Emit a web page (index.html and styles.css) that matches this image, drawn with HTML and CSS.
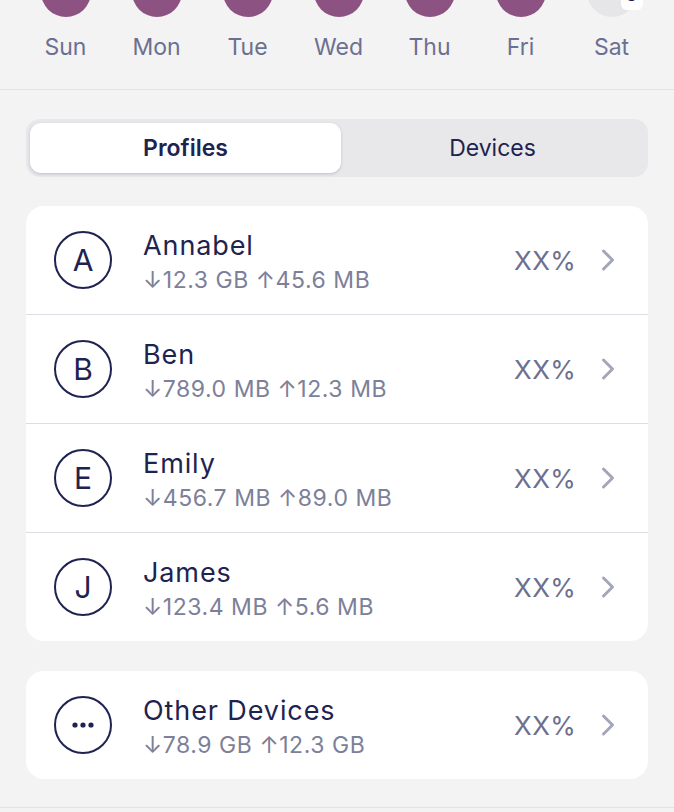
FILE: index.html
```html
<!DOCTYPE html>
<html>
<head>
<meta charset="utf-8">
<link rel="stylesheet" href="styles.css">
</head>
<body>
<div class="week">
  <div class="day"><span class="dot filled"></span><span class="label">Sun</span></div>
  <div class="day"><span class="dot filled"></span><span class="label">Mon</span></div>
  <div class="day"><span class="dot filled"></span><span class="label">Tue</span></div>
  <div class="day"><span class="dot filled"></span><span class="label">Wed</span></div>
  <div class="day"><span class="dot filled"></span><span class="label">Thu</span></div>
  <div class="day"><span class="dot filled"></span><span class="label">Fri</span></div>
  <div class="day"><span class="dot empty"><span class="badge">8</span></span><span class="label">Sat</span></div>
</div>

<div class="segmented">
  <div class="seg active">Profiles</div>
  <div class="seg">Devices</div>
</div>

<div class="card">
  <div class="row">
    <div class="avatar">A</div>
    <div class="info"><div class="name">Annabel</div><div class="usage">↓12.3 GB ↑45.6 MB</div></div>
    <div class="pct">XX%</div>
    <svg class="chev" viewBox="0 0 14 24" width="14" height="24"><path d="M2.5 3 L11.5 12 L2.5 21" fill="none" stroke="currentColor" stroke-width="3" stroke-linecap="round" stroke-linejoin="round"/></svg>
  </div>
  <div class="row">
    <div class="avatar">B</div>
    <div class="info"><div class="name">Ben</div><div class="usage">↓789.0 MB ↑12.3 MB</div></div>
    <div class="pct">XX%</div>
    <svg class="chev" viewBox="0 0 14 24" width="14" height="24"><path d="M2.5 3 L11.5 12 L2.5 21" fill="none" stroke="currentColor" stroke-width="3" stroke-linecap="round" stroke-linejoin="round"/></svg>
  </div>
  <div class="row">
    <div class="avatar">E</div>
    <div class="info"><div class="name">Emily</div><div class="usage">↓456.7 MB ↑89.0 MB</div></div>
    <div class="pct">XX%</div>
    <svg class="chev" viewBox="0 0 14 24" width="14" height="24"><path d="M2.5 3 L11.5 12 L2.5 21" fill="none" stroke="currentColor" stroke-width="3" stroke-linecap="round" stroke-linejoin="round"/></svg>
  </div>
  <div class="row">
    <div class="avatar">J</div>
    <div class="info"><div class="name">James</div><div class="usage">↓123.4 MB ↑5.6 MB</div></div>
    <div class="pct">XX%</div>
    <svg class="chev" viewBox="0 0 14 24" width="14" height="24"><path d="M2.5 3 L11.5 12 L2.5 21" fill="none" stroke="currentColor" stroke-width="3" stroke-linecap="round" stroke-linejoin="round"/></svg>
  </div>
</div>

<div class="card other">
  <div class="row">
    <div class="avatar dots"><svg viewBox="0 0 24 8" width="24" height="8"><circle cx="4" cy="4" r="2.6" fill="currentColor"/><circle cx="12" cy="4" r="2.6" fill="currentColor"/><circle cx="20" cy="4" r="2.6" fill="currentColor"/></svg></div>
    <div class="info"><div class="name">Other Devices</div><div class="usage">↓78.9 GB ↑12.3 GB</div></div>
    <div class="pct">XX%</div>
    <svg class="chev" viewBox="0 0 14 24" width="14" height="24"><path d="M2.5 3 L11.5 12 L2.5 21" fill="none" stroke="currentColor" stroke-width="3" stroke-linecap="round" stroke-linejoin="round"/></svg>
  </div>
</div>

<div class="bottom-line"></div>
</body>
</html>
```

FILE: styles.css
```css
* { box-sizing: border-box; }
html, body { margin: 0; padding: 0; }
body {
  background: #f3f3f3;
  font-family: "Inter", "Noto Sans", sans-serif;
  color: #1e2350;
  width: 674px;
  height: 812px;
  overflow: hidden;
}

.week {
  display: flex;
  padding-left: 20px;
  height: 90px;
  border-bottom: 1px solid #e2e2e6;
}
.day {
  width: 91px;
  display: flex;
  flex-direction: column;
  align-items: center;
}
.dot {
  position: relative;
  width: 50px;
  height: 50px;
  border-radius: 50%;
  margin-top: -33px;
  display: block;
}
.dot.filled { background: #8c5282; }
.dot.empty { background: #e6e6e9; }
.badge {
  position: absolute;
  right: -6px;
  top: 21px;
  width: 22px;
  height: 22px;
  border-radius: 6px;
  background: #ffffff;
  font-size: 16px;
  font-weight: 700;
  color: #1e2350;
  line-height: 16px;
  display: flex;
  align-items: flex-end;
  justify-content: center;
  padding-bottom: 7px;
}
.label {
  margin-top: 16px;
  font-size: 23px;
  line-height: 28px;
  color: #6c7090;
}

.segmented {
  margin: 29px 26px 0;
  height: 58px;
  background: #e8e8eb;
  border-radius: 14px;
  padding: 4px;
  display: grid;
  grid-template-columns: 311px 1fr;
}
.seg {
  display: flex;
  align-items: center;
  justify-content: center;
  font-size: 23px;
  color: #1e2350;
  border-radius: 11px;
}
.seg.active {
  background: #ffffff;
  font-weight: 600;
  box-shadow: 0 1px 3px rgba(40, 40, 80, 0.22);
}

.card {
  margin: 29px 26px 0;
  background: #ffffff;
  border-radius: 18px;
}
.card.other { margin-top: 30px; }
.row {
  height: 109px;
  display: flex;
  align-items: center;
  padding: 0 33px 0 28px;
  border-bottom: 1px solid #dcdce3;
}
.row:last-child {
  border-bottom: none;
  height: 108px;
}
.avatar {
  width: 58px;
  height: 58px;
  border: 2px solid #1e2350;
  border-radius: 50%;
  display: flex;
  align-items: center;
  justify-content: center;
  font-size: 30px;
  color: #1e2350;
  flex-shrink: 0;
}
.info {
  margin-left: 31px;
  flex: 1;
  padding-top: 5px;
}
.name {
  font-size: 27px;
  line-height: 32px;
  letter-spacing: 0.9px;
  color: #1e2350;
}
.usage {
  font-size: 23px;
  line-height: 30px;
  letter-spacing: 0.55px;
  color: #7c8099;
  margin-top: 3px;
}
.pct {
  font-size: 26px;
  letter-spacing: 0.3px;
  color: #6c7090;
  margin-right: 25px;
}
.chev {
  color: #a3a6b8;
  display: block;
}

.bottom-line {
  margin-top: 28px;
  border-top: 1px solid #e2e2e6;
}
```
